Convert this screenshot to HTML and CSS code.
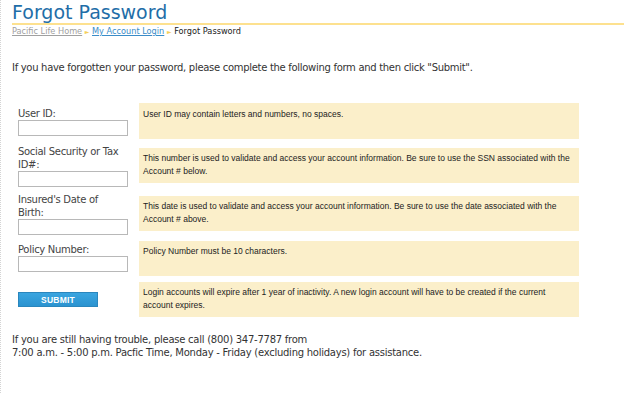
FILE: index.html
```html
<!DOCTYPE html>
<html lang="en">
<head>
  <meta charset="utf-8" />
  <title>Forgot Password</title>
  <link rel="stylesheet" href="styles.css">
</head>
<body>

<div class="page">
  <h1>Forgot Password</h1>
  <div class="crumbs">
    <a href="#" class="home">Pacific Life Home</a>
    <span class="arrow">&#9658;</span>
    <a href="#">My Account Login</a>
    <span class="arrow">&#9658;</span>
    <span class="here">Forgot Password</span>
  </div>

  <p class="intro">If you have forgotten your password, please complete the following form and then click "Submit".</p>

  <div class="form">
    <div class="row row1">
      <div class="field">
        <label>User ID:</label>
        <input type="text" />
      </div>
      <div class="help">User ID may contain letters and numbers, no spaces.</div>
    </div>

    <div class="row row2">
      <div class="field">
        <label>Social Security or Tax ID#:</label>
        <input type="text" />
      </div>
      <div class="help">This number is used to validate and access your account information. Be sure to use the SSN associated with the Account # below.</div>
    </div>

    <div class="row row3">
      <div class="field">
        <label>Insured's Date of Birth:</label>
        <input type="text" />
      </div>
      <div class="help">This date is used to validate and access your account information. Be sure to use the date associated with the Account # above.</div>
    </div>

    <div class="row row4">
      <div class="field">
        <label>Policy Number:</label>
        <input type="text" />
      </div>
      <div class="help">Policy Number must be 10 characters.</div>
    </div>

    <div class="row row5">
      <div class="field">
        <button type="button" class="submit">SUBMIT</button>
      </div>
      <div class="help">Login accounts will expire after 1 year of inactivity. A new login account will have to be created if the current account expires.</div>
    </div>
  </div>

  <p class="footer">If you are still having trouble, please call (800) 347-7787 from<br>
  7:00 a.m. - 5:00 p.m. Pacfic Time, Monday - Friday (excluding holidays) for assistance.</p>
</div>

</body>
</html>
```

FILE: styles.css
```css
html, body {
  margin: 0;
  padding: 0;
  background: #fff;
}

body {
  font-family: "DejaVu Sans", Verdana, sans-serif;
  color: #333;
  border-left: 1px dotted #d4d4d4;
  min-height: 393px;
  box-sizing: border-box;
}

.page {
  padding-left: 11px;
}

h1 {
  margin: 0;
  padding-top: 1px;
  font-size: 19px;
  font-weight: normal;
  line-height: 22px;
  color: #1f6ea8;
  border-bottom: 2px solid #fde18f;
}

.crumbs {
  font-size: 8.2px;
  line-height: 13px;
  color: #222;
}

.crumbs a {
  color: #3a8cc8;
}

.crumbs a.home {
  color: #a0a0a0;
}

.crumbs .arrow {
  color: #f5cf5a;
  font-size: 6px;
}

.intro {
  margin: 23px 0 0 0;
  font-size: 10px;
  letter-spacing: -0.3px;
  line-height: 14px;
}

.form {
  margin: 28px 0 0 6px;
}

.row {
  display: flex;
  align-items: flex-start;
  margin-bottom: 6px;
}

.field {
  width: 121px;
  flex: none;
}

.field label {
  display: block;
  width: 104px;
  font-size: 10px;
  letter-spacing: -0.3px;
  line-height: 13px;
  color: #444;
}

.field input {
  display: block;
  width: 110px;
  height: 16px;
  margin: 0;
  padding: 0;
  border: 1px solid #b8b8b8;
  box-sizing: border-box;
}

.help {
  width: 440px;
  height: 35px;
  box-sizing: border-box;
  padding: 4px 4px;
  background: #fbefca;
  font-family: "Liberation Sans", Arial, sans-serif;
  font-size: 8.5px;
  line-height: 13px;
  color: #222;
}

.row1 .field {
  padding-top: 4px;
}

.row1 .help {
  height: 36px;
  padding-top: 5px;
}

.row2 .help,
.row3 .help {
  margin-top: 3px;
}

.row4 .field {
  padding-top: 2px;
}

.row5 .field {
  padding-top: 10px;
}

.submit {
  display: block;
  width: 80px;
  height: 15px;
  margin: 0;
  padding: 0;
  border: 1px solid #2a86bd;
  background: linear-gradient(#3aa5e0, #2b93d0);
  color: #fff;
  font-family: "Liberation Sans", Arial, sans-serif;
  font-size: 8.5px;
  font-weight: bold;
  letter-spacing: 0.2px;
}

.footer {
  margin: 16px 0 0 0;
  font-size: 10px;
  letter-spacing: -0.25px;
  line-height: 13px;
  color: #333;
}
```
